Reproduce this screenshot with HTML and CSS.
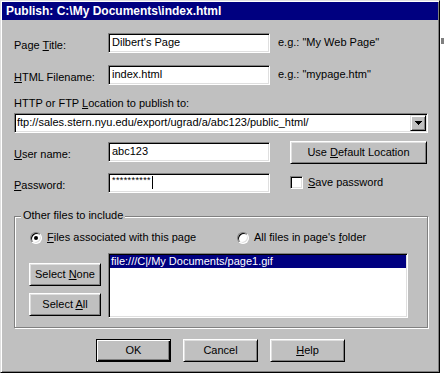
FILE: index.html
```html
<!DOCTYPE html>
<html>
    <head>
        <meta charset="utf-8" />
        <title>Publish</title>
        <link rel="stylesheet" href="styles.css">
    </head>

    <body>
        <div class="page">
            <div class="window">
                <div class="titlebar">Publish: C:\My Documents\index.html</div>

                <div class="form">
                    <!-- page title -->
                    <div class="row row-first">
                        <span class="label">Page <u>T</u>itle:</span>
                        <div class="field">Dilbert's Page</div>
                        <span class="hint">e.g.: "My Web Page"</span>
                    </div>
                    <div class="row row-next">
                        <span class="label"><u>H</u>TML Filename:</span>
                        <div class="field">index.html</div>
                        <span class="hint">e.g.: "mypage.htm"</span>
                    </div>

                    <!-- location -->
                    <div class="location-label">HTTP or FTP <u>L</u>ocation to publish to:</div>
                    <div class="combo">
                        <div class="combo-text">ftp://sales.stern.nyu.edu/export/ugrad/a/abc123/public_html/</div>
                        <div class="drop-btn">
                            <span class="arrow"><i class="a7"></i><i class="a5"></i><i class="a3"></i><i class="a1"></i></span>
                        </div>
                    </div>

                    <div class="row row-user">
                        <span class="label"><u>U</u>ser name:</span>
                        <div class="field">abc123</div>
                        <div class="btn btn-wide">Use <u>D</u>efault Location</div>
                    </div>
                    <div class="row row-pass">
                        <span class="label"><u>P</u>assword:</span>
                        <div class="field field-pass"><span class="stars">**********</span><span class="caret"></span></div>
                        <div class="check-line">
                            <span class="checkbox"></span>
                            <span class="check-text"><u>S</u>ave password</span>
                        </div>
                    </div>

                    <!-- other files -->
                    <div class="group">
                        <div class="legend">Other files to include</div>
                        <div class="options">
                            <div class="option option-first">
                                <span class="radio checked"></span>
                                <span><u>F</u>iles associated with this page</span>
                            </div>
                            <div class="option">
                                <span class="radio"></span>
                                <span>All files in page's <u>f</u>older</span>
                            </div>
                        </div>
                        <div class="files">
                            <div class="side-btns">
                                <div class="btn btn-side">Select <u>N</u>one</div>
                                <div class="btn btn-side">Select <u>A</u>ll</div>
                            </div>
                            <div class="list">
                                <div class="list-item selected">file:///C|/My Documents/page1.gif</div>
                            </div>
                        </div>
                    </div>
                </div>

                <div class="actions">
                    <div class="btn btn-default">OK</div>
                    <div class="btn">Cancel</div>
                    <div class="btn"><u>H</u>elp</div>
                </div>
            </div>

            <div class="edge"><span class="mark"></span></div>
        </div>
    </body>
</html>
```

FILE: styles.css
```css
body {
    margin: 0;
    background: #fff;
    font: 11px/13px "Liberation Sans", Arial, sans-serif;
    color: #000;
}

.page {
    display: flex;
    align-items: flex-start;
}

.window {
    width: 440px;
    height: 373px;
    box-sizing: border-box;
    padding: 1px;
    background: #c0c0c0;
    border: 1px solid;
    border-color: #dfdfdf #000 #000 #dfdfdf;
    box-shadow: inset 1px 1px #fff, inset -1px -1px #808080;
}

.titlebar {
    height: 18px;
    line-height: 18px;
    padding-left: 4px;
    background: #000080;
    color: #fff;
    font-size: 12px;
    font-weight: bold;
    white-space: nowrap;
}

.form {
    padding: 0 12px;
}

/* label / field / extra rows */
.row {
    display: grid;
    grid-template-columns: 86px 162px auto;
    grid-template-rows: 20px;
    column-gap: 8px;
}

.row-first {
    margin-top: 13px;
}

.row-next {
    margin-top: 12px;
}

.row-user {
    margin-top: 9px;
}

.row-pass {
    margin-top: 11px;
}

.label {
    padding-top: 6px;
    white-space: nowrap;
}

.hint {
    padding-top: 3px;
    white-space: nowrap;
}

.field {
    height: 20px;
    box-sizing: border-box;
    padding: 2px 3px;
    background: #fff;
    border: 1px solid;
    border-color: #808080 #fff #fff #808080;
    box-shadow: inset 1px 1px #000, inset -1px -1px #dfdfdf;
    white-space: nowrap;
    overflow: hidden;
}

.field-pass {
    display: flex;
    align-items: flex-start;
}

.stars {
    font-size: 9px;
    line-height: 9px;
    letter-spacing: 0.4px;
}

.caret {
    width: 1px;
    height: 13px;
    margin-left: 1px;
    background: #000;
}

.location-label {
    margin-top: 12px;
}

.combo {
    display: flex;
    width: 414px;
    height: 20px;
    box-sizing: border-box;
    margin-top: 3px;
    padding: 1px;
    background: #fff;
    border: 1px solid;
    border-color: #808080 #fff #fff #808080;
    box-shadow: inset 1px 1px #000, inset -1px -1px #dfdfdf;
}

.combo-text {
    flex: 1;
    padding: 1px 0 0 1px;
    white-space: nowrap;
}

.drop-btn {
    width: 16px;
    height: 16px;
    box-sizing: border-box;
    display: flex;
    align-items: center;
    justify-content: center;
    background: #c0c0c0;
    border: 1px solid;
    border-color: #dfdfdf #000 #000 #dfdfdf;
    box-shadow: inset 1px 1px #fff, inset -1px -1px #808080;
}

.arrow {
    display: flex;
    flex-direction: column;
    align-items: center;
    margin-top: -1px;
}

.arrow i {
    display: block;
    height: 1px;
    background: #000;
}

.arrow .a7 { width: 7px; }
.arrow .a5 { width: 5px; }
.arrow .a3 { width: 3px; }
.arrow .a1 { width: 1px; }

/* buttons */
.btn {
    width: 75px;
    height: 23px;
    box-sizing: border-box;
    line-height: 21px;
    text-align: center;
    background: #c0c0c0;
    border: 1px solid;
    border-color: #fff #000 #000 #fff;
    box-shadow: inset 1px 1px #dfdfdf, inset -1px -1px #808080;
    white-space: nowrap;
}

.btn-default {
    border-color: #000;
    box-shadow: inset 1px 1px #fff, inset -1px -1px #000, inset -2px -2px #808080;
}

.btn-wide {
    width: 137px;
    margin: -1px 0 0 12px;
}

.btn-side {
    width: 72px;
}

.check-line {
    display: flex;
    align-items: flex-start;
    margin-left: 12px;
    padding-top: 3px;
}

.checkbox {
    width: 13px;
    height: 13px;
    box-sizing: border-box;
    background: #fff;
    border: 1px solid;
    border-color: #808080 #fff #fff #808080;
    box-shadow: inset 1px 1px #000, inset -1px -1px #dfdfdf;
}

.check-text {
    margin-left: 5px;
}

/* group box */
.group {
    width: 414px;
    height: 112px;
    box-sizing: border-box;
    margin-top: 23px;
    border: 1px solid #808080;
    box-shadow: inset 1px 1px #fff, 1px 1px #fff;
}

.legend {
    width: fit-content;
    margin: -8px 0 0 6px;
    padding: 0 2px;
    background: #c0c0c0;
}

.options {
    display: flex;
    margin-top: 9px;
    padding-left: 15px;
}

.option {
    display: flex;
    align-items: center;
}

.option-first {
    width: 207px;
}

.radio {
    position: relative;
    width: 12px;
    height: 12px;
    box-sizing: border-box;
    margin-right: 5px;
    border-radius: 50%;
    background: #fff;
    border: 1px solid;
    border-color: #808080 #fff #fff #808080;
    box-shadow: inset 1px 1px #000, inset -1px -1px #dfdfdf;
}

.radio.checked::after {
    content: "";
    position: absolute;
    left: 3px;
    top: 3px;
    width: 4px;
    height: 4px;
    border-radius: 50%;
    background: #000;
}

.files {
    display: flex;
    margin-top: 9px;
    padding-left: 14px;
}

.side-btns {
    display: flex;
    flex-direction: column;
    gap: 7px;
    padding-top: 10px;
    margin-right: 7px;
}

.list {
    width: 300px;
    height: 65px;
    box-sizing: border-box;
    padding: 1px;
    background: #fff;
    border: 1px solid;
    border-color: #808080 #fff #fff #808080;
    box-shadow: inset 1px 1px #000, inset -1px -1px #dfdfdf;
}

.list-item {
    padding-left: 1px;
    white-space: nowrap;
}

.list-item.selected {
    background: #000080;
    color: #fff;
}

.actions {
    display: flex;
    gap: 12px;
    margin-top: 11px;
    padding-left: 94px;
}

.edge {
    padding-top: 38px;
}

.mark {
    display: block;
    width: 3px;
    height: 6px;
    margin-left: 1px;
    background: #808080;
}
```
